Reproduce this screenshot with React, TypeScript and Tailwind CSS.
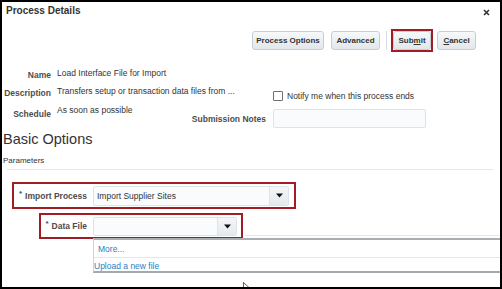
import React from "react";

const font = "font-['Liberation_Sans',Arial,sans-serif]";

function Btn({ children, w, className = "" }: { children: React.ReactNode; w: string; className?: string }) {
  return (
    <div
      className={`${w} h-[19px] flex items-center justify-center rounded-[3px] border border-[#c5cdd5] bg-gradient-to-b from-[#f7f9fa] to-[#e2e7eb] text-[8px] leading-[10px] font-bold text-[#333] whitespace-nowrap ${className}`}
    >
      {children}
    </div>
  );
}

function Caret() {
  return (
    <div className="w-[19px] h-full flex items-center justify-center border-l border-[#dde3e8] bg-gradient-to-b from-[#f4f6f8] to-[#e5e9ed] rounded-r-[2px]">
      <svg width="7" height="5" viewBox="0 0 7 5">
        <path d="M0 0.5 H7 L3.5 4.5 Z" fill="#111" />
      </svg>
    </div>
  );
}

const label = "text-[8.5px] leading-[10px] font-bold text-[#4d4d4d] whitespace-nowrap";
const value = "text-[8.5px] leading-[10px] text-[#333] whitespace-nowrap";

export default function App() {
  return (
    <div className={`${font} w-[502px] h-[289px] border-2 border-black bg-white relative overflow-hidden text-[#333]`}>
      {/* header */}
      <div className="flex justify-between items-start pl-[4px] pr-[10px] pt-[3px]">
        <div className="text-[10px] leading-[12px] font-bold text-[#333]">Process Details</div>
        <svg className="mt-[4px]" width="7" height="7" viewBox="0 0 7 7">
          <path d="M1 1 L6 6 M6 1 L1 6" stroke="#333" strokeWidth="1.6" />
        </svg>
      </div>

      {/* buttons */}
      <div className="flex justify-end items-center pr-[24px] mt-[12px] h-[23px]">
        <Btn w="w-[72px]">Process Options</Btn>
        <Btn w="w-[49px]" className="ml-[7px]">Advanced</Btn>
        <div className="w-px h-[19px] bg-[#d9dee3] ml-[6px]" />
        <div className="ml-[4px] border-2 border-[#a01d25] h-[23px] flex items-center">
          <Btn w="w-[38px]">
            <span>
              Sub<span className="underline">m</span>it
            </span>
          </Btn>
        </div>
        <Btn w="w-[39px]" className="ml-[4px]">
          <span>
            <span className="underline">C</span>ancel
          </span>
        </Btn>
      </div>

      {/* details */}
      <div className="mt-[14px] flex flex-col">
        <div className="flex items-start h-[20px]">
          <div className={`w-[49px] text-right pt-[4px] ${label}`}>Name</div>
          <div className={`ml-[6px] pt-[1.5px] ${value}`}>Load Interface File for Import</div>
        </div>
        <div className="flex items-start h-[19px]">
          <div className={`w-[49px] text-right pt-[2px] ${label}`}>Description</div>
          <div className={`ml-[6px] w-[215px] ${value}`}>Transfers setup or transaction data files from ...</div>
          <div className="flex items-center pt-[5px] ml-[1px]">
            <div className="w-[10px] h-[10px] border border-[#707070] bg-white rounded-[1px]" />
            <div className={`ml-[4px] ${value}`}>Notify me when this process ends</div>
          </div>
        </div>
        <div className="flex items-start h-[25px]">
          <div className={`w-[49px] text-right pt-[3.5px] ${label}`}>Schedule</div>
          <div className="ml-[6px] w-[209px] flex justify-between items-start">
            <div className={value}>As soon as possible</div>
            <div className={`pt-[8.5px] ${label}`}>Submission Notes</div>
          </div>
          <div className="ml-[7px] mt-[4px] w-[153px] h-[19px] border border-[#dde3e8] bg-[#fafbfd] rounded-[2px]" />
        </div>
      </div>

      {/* Basic options */}
      <div className="pl-[1px] mt-[1px]">
        <div className="text-[14.5px] leading-[17px] text-[#333] whitespace-nowrap">Basic Options</div>
        <div className="text-[8px] leading-[10px] text-[#333] mt-[8px]">Parameters</div>
      </div>
      <div className="h-px bg-[#e3e7eb] w-[486px] ml-[5px] mt-[3px]" />

      {/* Import process */}
      <div className="ml-[10px] mt-[12px] w-[284px] h-[27px] border-2 border-[#a01d25] flex items-center">
        <div className={`w-[73px] flex justify-end items-start ${label}`}>
          <span className="text-[#34506f] text-[8px] leading-[8px] mr-[3px] -mt-[1px]">*</span>
          <span>Import Process</span>
        </div>
        <div className="ml-[6px] w-[196px] h-[20px] border border-[#dde3e8] bg-[#fafbfd] rounded-[2px] flex items-center justify-between">
          <div className={`pl-[3px] ${value}`}>Import Supplier Sites</div>
          <Caret />
        </div>
      </div>

      {/* Data file */}
      <div className="ml-[37px] mt-[4px] w-[204px] h-[26px] border-2 border-[#a01d25] flex items-center">
        <div className={`w-[46px] flex justify-end items-start ${label}`}>
          <span className="text-[#34506f] text-[8px] leading-[8px] mr-[3px] -mt-[1px]">*</span>
          <span>Data File</span>
        </div>
        <div className="ml-[6px] w-[144px] h-[19px] border border-[#dde3e8] bg-[#fafbfd] rounded-[2px] flex items-center justify-end">
          <Caret />
        </div>
      </div>

      {/* faint divider behind popup */}
      <div className="absolute left-[243px] top-[233px] w-[260px] h-px bg-[#e6e9ec]" />

      {/* popup */}
      <div className="absolute left-[91px] top-[236px] w-[412px] bg-white border-t-2 border-b-2 border-l border-t-[#a9aeb3] border-b-[#a4a9ae] border-l-[#cfd4d9]">
        <div className="h-[18px] flex items-center pl-[4px] text-[8.5px] leading-[10px] text-[#2d7cc1] border-b border-[#e3e7eb] whitespace-nowrap">
          More...
        </div>
        <div className="h-[13px] flex items-center pt-[2px] text-[8.5px] leading-[10px] text-[#2d7cc1] whitespace-nowrap">
          Upload a new file
        </div>
      </div>

      {/* cursor */}
      <svg className="absolute left-[241px] top-[280px]" width="7" height="10" viewBox="0 0 7 10">
        <path d="M0.5 0.5 L0.5 8 L2.5 6.2 L4 9.2 L5.2 8.6 L3.8 5.8 L6.3 5.8 Z" fill="#fff" stroke="#333" strokeWidth="0.8" />
      </svg>
    </div>
  );
}
